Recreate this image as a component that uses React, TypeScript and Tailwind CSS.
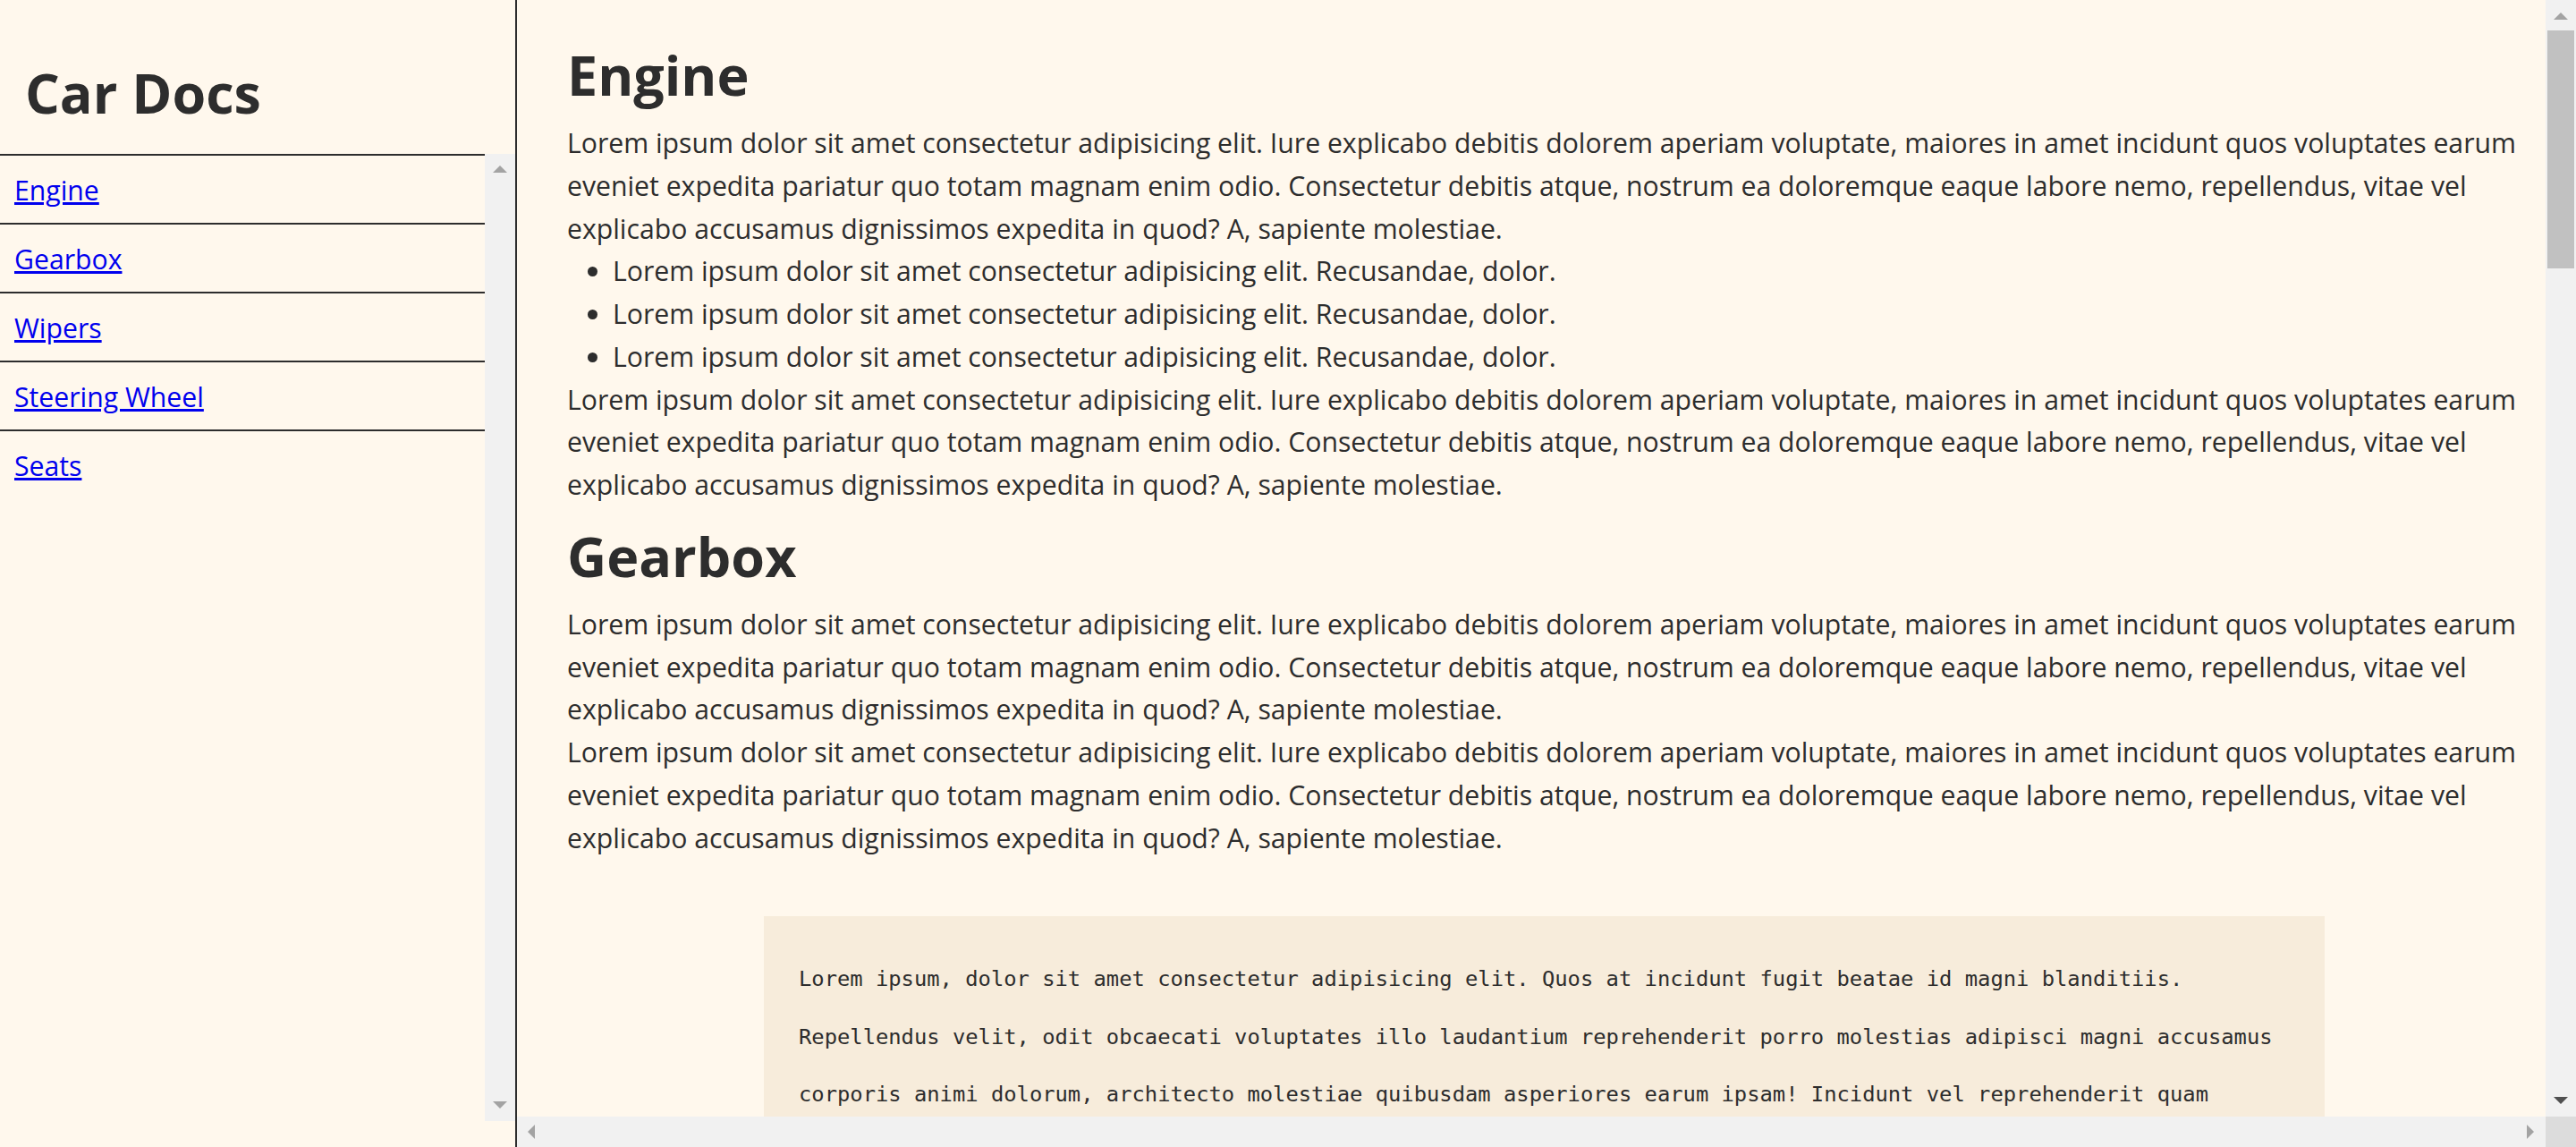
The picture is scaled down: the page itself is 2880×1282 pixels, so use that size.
import React from "react";

const PARA = [
  "Lorem ipsum dolor sit amet consectetur adipisicing elit. Iure explicabo debitis dolorem aperiam voluptate, maiores in amet incidunt quos voluptates earum",
  "eveniet expedita pariatur quo totam magnam enim odio. Consectetur debitis atque, nostrum ea doloremque eaque labore nemo, repellendus, vitae vel",
  "explicabo accusamus dignissimos expedita in quod? A, sapiente molestiae.",
];

const BULLET = "Lorem ipsum dolor sit amet consectetur adipisicing elit. Recusandae, dolor.";

const CODE = [
  "Lorem ipsum, dolor sit amet consectetur adipisicing elit. Quos at incidunt fugit beatae id magni blanditiis.",
  "Repellendus velit, odit obcaecati voluptates illo laudantium reprehenderit porro molestias adipisci magni accusamus",
  "corporis animi dolorum, architecto molestiae quibusdam asperiores earum ipsam! Incidunt vel reprehenderit quam",
];

const NAV = ["Engine", "Gearbox", "Wipers", "Steering Wheel", "Seats"];

function Tri({ dir, color }: { dir: "up" | "down" | "left" | "right"; color: string }) {
  if (dir === "up")
    return (
      <svg width="16" height="8" viewBox="0 0 16 8" className="block">
        <polygon points="8,0 16,8 0,8" fill={color} />
      </svg>
    );
  if (dir === "down")
    return (
      <svg width="16" height="8" viewBox="0 0 16 8" className="block">
        <polygon points="0,0 16,0 8,8" fill={color} />
      </svg>
    );
  if (dir === "left")
    return (
      <svg width="8" height="16" viewBox="0 0 8 16" className="block">
        <polygon points="8,0 8,16 0,8" fill={color} />
      </svg>
    );
  return (
    <svg width="8" height="16" viewBox="0 0 8 16" className="block">
      <polygon points="0,0 8,8 0,16" fill={color} />
    </svg>
  );
}

function Para() {
  return (
    <p>
      {PARA.map((l, i) => (
        <span key={i} className="block whitespace-nowrap">
          {l}
        </span>
      ))}
    </p>
  );
}

export default function App() {
  return (
    <div className="flex h-[1282px] w-[2880px] overflow-hidden bg-[#fff8ed] font-['Open_Sans',sans-serif] text-[#2d2d2d]">
      {/* Sidebar */}
      <aside className="flex w-[578px] shrink-0 flex-col border-r-2 border-[#2d2d2d]">
        <div className="h-[172px] shrink-0 pl-[28px] pt-[68px]">
          <h1 className="text-[61px] font-bold leading-[72px]">Car Docs</h1>
        </div>
        <div className="flex h-[1081px] shrink-0">
          <ul className="w-[542px]">
            {NAV.map((n) => (
              <li key={n} className="h-[77px] border-t-2 border-[#2d2d2d] pl-[16px] pt-[17px]">
                <a href="#" className="text-[30.2px] leading-[43px] text-[#0000ee] underline">
                  {n}
                </a>
              </li>
            ))}
          </ul>
          <div className="flex w-[34px] flex-col items-center justify-between bg-[#f1f1f1] pb-[14px] pt-[13px]">
            <Tri dir="up" color="#a3a3a3" />
            <Tri dir="down" color="#a3a3a3" />
          </div>
        </div>
      </aside>

      {/* Main */}
      <div className="flex min-w-0 flex-1 flex-col">
        <div className="flex h-[1248px] shrink-0">
          <main className="min-w-0 flex-1 overflow-hidden pl-[56px] pt-[48px] text-[30.2px] leading-[47.75px]">
            <section>
              <h2 className="mb-[16px] text-[61px] font-bold leading-[72px]">Engine</h2>
              <Para />
              <ul className="list-disc pl-[51px]">
                {[0, 1, 2].map((i) => (
                  <li key={i} className="whitespace-nowrap">
                    {BULLET}
                  </li>
                ))}
              </ul>
              <Para />
            </section>
            <section className="mt-[20px]">
              <h2 className="mb-[16px] text-[61px] font-bold leading-[72px]">Gearbox</h2>
              <Para />
              <Para />
            </section>
            <div className="ml-[220px] mt-[64px] w-[1745px] bg-[#f7ecdb] pb-[80px] pl-[39px] pt-[38px] font-['DejaVu_Sans_Mono',monospace] text-[23.8px] leading-[64.5px] text-[#2d2d2d]">
              {CODE.map((l, i) => (
                <span key={i} className="block whitespace-nowrap">
                  {l}
                </span>
              ))}
            </div>
          </main>
          <div className="flex w-[34px] shrink-0 flex-col items-center bg-[#f1f1f1] pb-[14px] pt-[14px]">
            <Tri dir="up" color="#a3a3a3" />
            <div className="mt-[12px] h-[266px] w-[30px] bg-[#c1c1c1]" />
            <div className="flex-1" />
            <Tri dir="down" color="#505050" />
          </div>
        </div>
        <div className="flex h-[34px] shrink-0">
          <div className="flex flex-1 items-center justify-between bg-[#f1f1f1] pl-[12px] pr-[13px]">
            <Tri dir="left" color="#a3a3a3" />
            <Tri dir="right" color="#a3a3a3" />
          </div>
          <div className="w-[34px] bg-[#dcdcdc]" />
        </div>
      </div>
    </div>
  );
}
